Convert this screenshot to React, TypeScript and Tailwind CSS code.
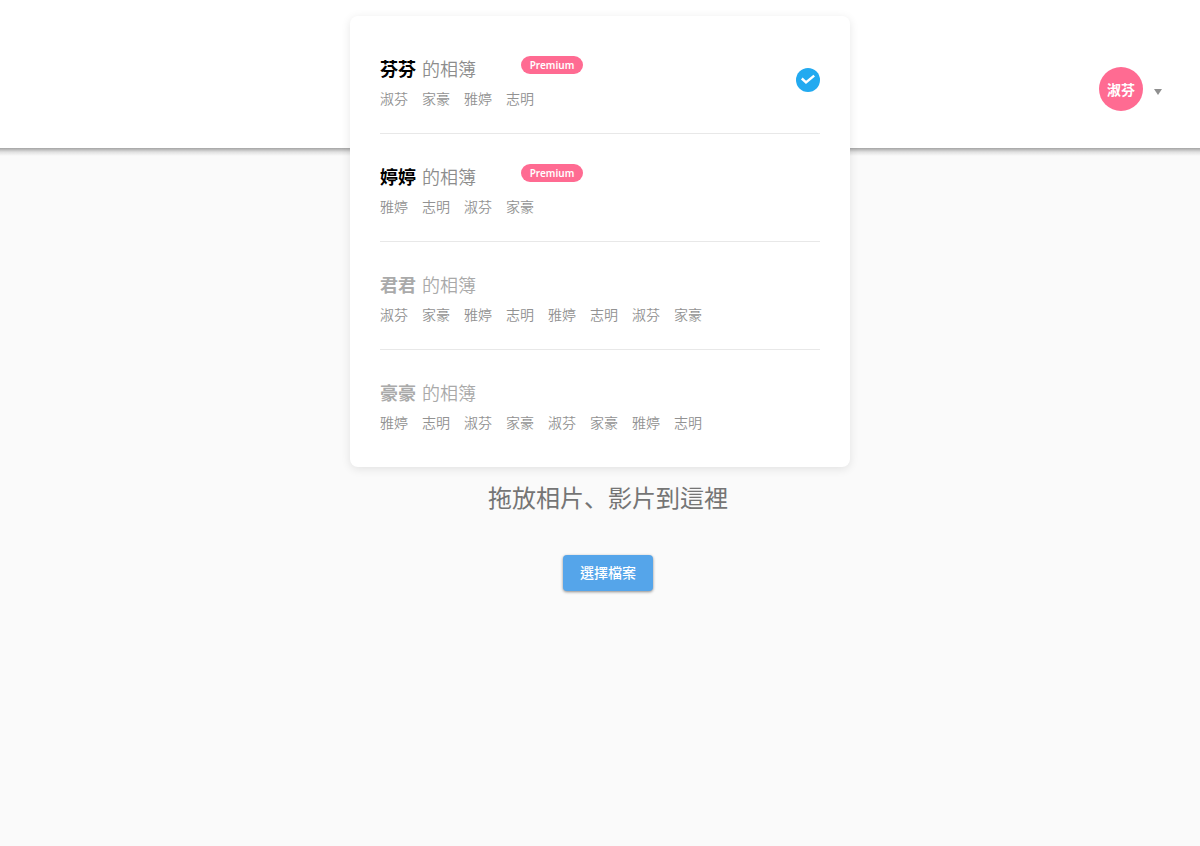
type Album = {
  owner: string;
  members: string[];
  premium?: boolean;
  selected?: boolean;
};

const albums: Album[] = [
  { owner: "芬芬", members: ["淑芬", "家豪", "雅婷", "志明"], premium: true, selected: true },
  { owner: "婷婷", members: ["雅婷", "志明", "淑芬", "家豪"], premium: true },
  { owner: "君君", members: ["淑芬", "家豪", "雅婷", "志明", "雅婷", "志明", "淑芬", "家豪"] },
  { owner: "豪豪", members: ["雅婷", "志明", "淑芬", "家豪", "淑芬", "家豪", "雅婷", "志明"] },
];

function CheckBadge() {
  return (
    <svg viewBox="0 0 24 24" className="size-6 shrink-0" role="img" aria-label="已選取">
      <circle cx="12" cy="12" r="12" fill="#22aaf0" />
      <path d="M5.8 10.5 10 14.4 18.2 7.6" fill="none" stroke="#fff" strokeWidth="2.4" />
    </svg>
  );
}

function AlbumRow({ album }: { album: Album }) {
  return (
    <li className="border-b border-[#e8e8e8] last:border-b-0">
      <button type="button" className="flex w-full items-center justify-between pt-[26px] pb-[25px] text-left">
        <span className="flex flex-col gap-1">
          <span className="flex items-start text-lg/8">
            <span className={album.premium ? "font-bold text-black" : "font-bold text-[#aaaaaa]"}>
              {album.owner}
            </span>
            <span className={album.premium ? "ml-1.5 font-[350] text-[#8c8c8c]" : "ml-1.5 font-[350] text-[#a9a9a9]"}>
              的相簿
            </span>
            {album.premium && (
              <span className="mt-1 ml-[45px] flex h-[18px] w-[62px] items-center justify-center rounded-full bg-[#ff6b92] pb-px font-['Noto_Sans'] text-[10px] leading-none font-semibold text-white">
                Premium
              </span>
            )}
          </span>
          <span className="flex gap-3.5 text-sm font-[350] text-[#929292]">
            {album.members.map((member, i) => (
              <span key={i}>{member}</span>
            ))}
          </span>
        </span>
        {album.selected && <CheckBadge />}
      </button>
    </li>
  );
}

export default function App() {
  return (
    <div className="relative flex min-h-screen flex-col bg-[#fafafa] font-['Noto_Sans_CJK_TC',sans-serif]">
      <header className="flex h-[148px] items-center justify-end bg-white pt-[30px] pr-[38px]">
        <button type="button" className="flex items-center gap-[11px]">
          <span className="flex size-11 items-center justify-center rounded-full bg-[#ff6b92] text-sm font-bold text-white">
            淑芬
          </span>
          <svg viewBox="0 0 8 6" className="mt-1.5 h-1.5 w-2" aria-hidden="true">
            <path d="M0 0H8L4 6Z" fill="#8f8f8f" />
          </svg>
        </button>
      </header>
      <div className="h-2 bg-linear-to-b from-[#a4a4a4] via-[#e0e0e0] to-[#fafafa]" />

      <main className="flex flex-col items-center gap-[41px] pt-[324px] pl-4">
        <h1 className="font-['Noto_Sans_CJK_JP',sans-serif] text-2xl/[34px] font-normal text-[#757575]">
          拖放相片、影片到這裡
        </h1>
        <button
          type="button"
          className="h-9 rounded bg-[#55a5ea] px-[17px] pb-0.5 text-sm font-medium text-white shadow-[0_1px_3px_rgba(0,0,0,0.45)]"
        >
          選擇檔案
        </button>
      </main>

      <ul className="absolute inset-x-0 top-4 mx-auto w-full max-w-[500px] rounded-lg bg-white px-[30px] py-2.5 shadow-[0_2px_10px_rgba(0,0,0,0.1)]">
        {albums.map((album) => (
          <AlbumRow key={album.owner} album={album} />
        ))}
      </ul>
    </div>
  );
}
